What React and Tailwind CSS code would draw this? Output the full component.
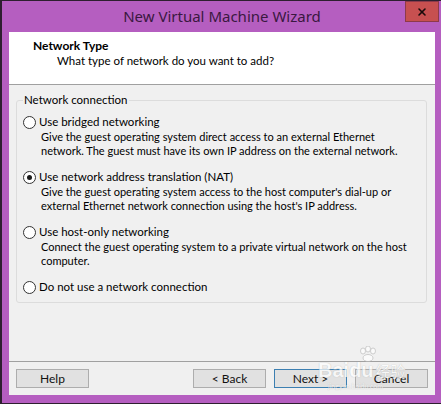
import { X } from 'lucide-react';

const font = { fontFamily: 'Lato, "Noto Sans", Arial, sans-serif' };

function Radio({ checked }) {
  return (
    <span className="w-[13px] h-[13px] rounded-full border border-[#333333] bg-white flex items-center justify-center shrink-0">
      {checked && <span className="w-[5px] h-[5px] rounded-full bg-[#1a1a1a]" />}
    </span>
  );
}

const options = [
  {
    label: 'Use bridged networking',
    desc: ['Give the guest operating system direct access to an external Ethernet', 'network. The guest must have its own IP address on the external network.'],
  },
  {
    label: 'Use network address translation (NAT)',
    checked: true,
    desc: ["Give the guest operating system access to the host computer's dial-up or", "external Ethernet network connection using the host's IP address."],
  },
  {
    label: 'Use host-only networking',
    desc: ['Connect the guest operating system to a private virtual network on the host', 'computer.'],
  },
  { label: 'Do not use a network connection', desc: [] },
];

function Button({ children, focused }) {
  return (
    <button
      className={`w-[73px] h-[19px] text-[12px] leading-none text-[#111] bg-[#e1e1e1] border ${
        focused ? 'border-[#3c7fb1]' : 'border-[#adadad]'
      }`}
    >
      {children}
    </button>
  );
}

// faint "Baidu 经验" watermark over the footer
function Watermark() {
  return (
    <div className="absolute left-[318px] top-[346px] pointer-events-none opacity-70 [text-shadow:0_0_1px_#9a9a9a]">
      <svg width="26" height="16" viewBox="0 0 26 16" className="absolute left-[38px] top-[0px]">
        <g fill="#ffffff" stroke="#b0b0b0" strokeWidth="0.8">
          <ellipse cx="7" cy="5" rx="2.5" ry="3" />
          <ellipse cx="12" cy="3" rx="2.5" ry="3" />
          <ellipse cx="17" cy="5" rx="2.5" ry="3" />
          <ellipse cx="12" cy="12" rx="5" ry="3.5" />
        </g>
      </svg>
      <div className="flex items-end pt-[14px] text-white leading-none">
        <span className="text-[20px] font-['Liberation_Sans'] font-bold">Bai</span>
        <span className="text-[20px] font-['Liberation_Sans'] font-bold">du</span>
        <span className="text-[15px] ml-[2px] mb-[2px] font-['Noto_Sans_CJK_SC']">经验</span>
      </div>
      <div className="text-[7px] text-white leading-none mt-[3px] ml-[10px]">jingyan.baidu.com</div>
    </div>
  );
}

export default function App() {
  return (
    <div className="relative w-[441px] h-[404px] bg-[#2e1f30] pl-[2px] pt-[1px] pb-[1px]" style={font}>
      <div className="h-full bg-[#b55ec0] flex flex-col pl-[7px] pr-[6px]">
        {/* Title bar */}
        <div className="h-[31px] relative flex items-center justify-center">
          <span className="text-[15px] text-[#3a1840] leading-none font-['Noto_Sans']">New Virtual Machine Wizard</span>
          <div className="absolute -right-[4px] top-0 w-[34px] h-[21px] bg-[#c75050] border border-[#8d3a4a] flex items-center justify-center">
            <X size={12} strokeWidth={3.2} className="text-[#1a0a0a]" />
          </div>
        </div>

        {/* Header */}
        <div className="h-[53px] bg-white border-b border-[#a0a0a0] pt-[7px] pl-[24px]">
          <div className="text-[12px] font-bold text-black leading-[14px]">Network Type</div>
          <div className="text-[11.5px] text-black leading-[14px] mt-[1px] pl-[24px]">What type of network do you want to add?</div>
        </div>

        {/* Body */}
        <div className="flex-1 bg-[#f0f0f0] px-[7px] pt-[8px]">
          <fieldset className="border border-[#dcdcdc] rounded-[3px] pl-[6px] pr-[6px] pb-[7px] w-[411px] min-w-0">
            <legend className="text-[11.5px] text-black leading-[14px] px-[1px]">Network connection</legend>
            <div className="flex flex-col gap-[11px] pt-[7px]">
              {options.map((o) => (
                <div key={o.label}>
                  <div className="h-[16px] flex items-center gap-[3px]">
                    <Radio checked={o.checked} />
                    <span className="text-[11.5px] text-black leading-[14px] whitespace-nowrap">{o.label}</span>
                  </div>
                  {o.desc.length > 0 && (
                    <div className="pl-[18px] text-[11px] text-black leading-[14px] whitespace-nowrap">
                      {o.desc.map((d) => (
                        <div key={d}>{d}</div>
                      ))}
                    </div>
                  )}
                </div>
              ))}
            </div>
          </fieldset>
        </div>

        {/* Footer */}
        <div className="bg-[#f0f0f0] border-t border-[#a0a0a0] h-[34px] flex items-start pt-[7px] pl-[7px] pr-[7px]">
          <Button>Help</Button>
          <div className="flex-1" />
          <div className="flex gap-[8px]">
            <Button>&lt; Back</Button>
            <Button focused>Next &gt;</Button>
            <Button>Cancel</Button>
          </div>
        </div>
        <div className="h-[8px]" />
      </div>
      <Watermark />
    </div>
  );
}
